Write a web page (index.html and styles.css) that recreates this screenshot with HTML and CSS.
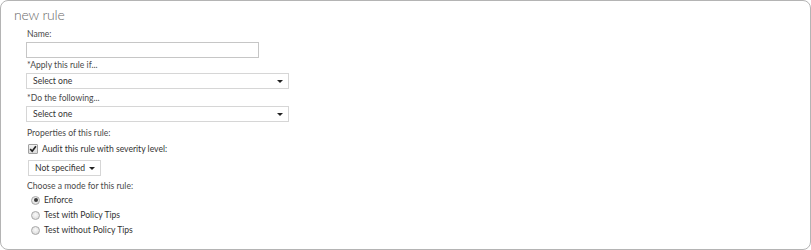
FILE: index.html
```html
<!DOCTYPE html>
<html>
<head>
<meta charset="utf-8">
<link rel="stylesheet" href="styles.css">
</head>
<body>
<div class="frame">
  <div class="title">new rule</div>
  <div class="form">
    <div class="label first">Name:</div>
    <div class="textbox"></div>
    <div class="label after-input">*Apply this rule if...</div>
    <div class="select wide"><span class="val">Select one</span><span class="caret"></span></div>
    <div class="label after-select">*Do the following...</div>
    <div class="select wide"><span class="val">Select one</span><span class="caret"></span></div>
    <div class="label section">Properties of this rule:</div>
    <div class="check-row">
      <span class="checkbox"><svg width="8" height="8" viewBox="0 0 8 8"><path d="M1.2 4 L3.2 6.2 L6.9 1.3" fill="none" stroke="#222" stroke-width="1.7"/></svg></span>
      <span class="opt">Audit this rule with severity level:</span>
    </div>
    <div class="select small"><span class="val">Not specified</span><span class="caret"></span></div>
    <div class="label section2">Choose a mode for this rule:</div>
    <div class="radio-row"><span class="radio on"></span><span class="opt">Enforce</span></div>
    <div class="radio-row"><span class="radio"></span><span class="opt">Test with Policy Tips</span></div>
    <div class="radio-row"><span class="radio"></span><span class="opt">Test without Policy Tips</span></div>
  </div>
</div>
</body>
</html>
```
FILE: styles.css
```css
html, body { margin: 0; padding: 0; background: #fff; }
body { font-family: Lato, "Open Sans", "Liberation Sans", sans-serif; color: #444; }
.frame {
  box-sizing: border-box;
  width: 811px;
  height: 250px;
  border: 1px solid #b4b4b4;
  border-radius: 8px;
  padding: 4px 0 0 13px;
}
.title {
  font-size: 14px;
  font-weight: 300;
  letter-spacing: -0.2px;
  color: #6a6a6a;
  line-height: 20px;
}
.form { padding-left: 12px; }
.label {
  font-size: 8.6px;
  line-height: 12px;
  color: #4a4a4a;
  padding-left: 1px;
  white-space: nowrap;
}
.label.first { margin-top: 3px; }
.label.after-input { margin-top: 1px; }
.label.after-select { margin-top: 3px; }
.label.section { margin-top: 5px; }
.label.section2 { margin-top: 4px; }
.textbox {
  box-sizing: border-box;
  width: 233px;
  height: 16px;
  border: 1px solid #c6c6c6;
  margin-top: 2px;
}
.select {
  box-sizing: border-box;
  height: 16px;
  border: 1px solid #d6d6d6;
  margin-top: 2px;
  display: flex;
  align-items: center;
  justify-content: space-between;
  font-size: 8.6px;
  color: #333;
  padding: 0 5px 0 6px;
  white-space: nowrap;
}
.select.wide { width: 263px; }
.select.small { width: 73px; margin-left: 2px; margin-top: 4px; padding-left: 6px; }
.caret {
  flex: none;
  width: 0; height: 0;
  border-left: 3px solid transparent;
  border-right: 3px solid transparent;
  border-top: 3px solid #222;
}
.check-row, .radio-row {
  display: flex;
  align-items: center;
  height: 14px;
  font-size: 8.6px;
  color: #333;
  white-space: nowrap;
}
.check-row { margin-top: 3px; padding-left: 2px; }
.radio-row { padding-left: 5px; margin-top: 1px; }
.checkbox {
  box-sizing: border-box;
  width: 10px; height: 10px;
  border: 1px solid #a0a0a0;
  border-radius: 1px;
  background: linear-gradient(#f2f2f2, #dcdcdc);
  display: flex; align-items: center; justify-content: center;
  margin-right: 4px;
}
.checkbox svg { display: block; }
.radio {
  box-sizing: border-box;
  width: 9px; height: 9px;
  border-radius: 50%;
  border: 1px solid #a8a8a8;
  background: radial-gradient(circle at 50% 40%, #fafafa 0, #d6d6d6 100%);
  margin-right: 4px;
  position: relative;
}
.radio.on::after {
  content: "";
  position: absolute;
  left: 1.5px; top: 1.5px;
  width: 4px; height: 4px;
  border-radius: 50%;
  background: #3a3a3a;
}
```
